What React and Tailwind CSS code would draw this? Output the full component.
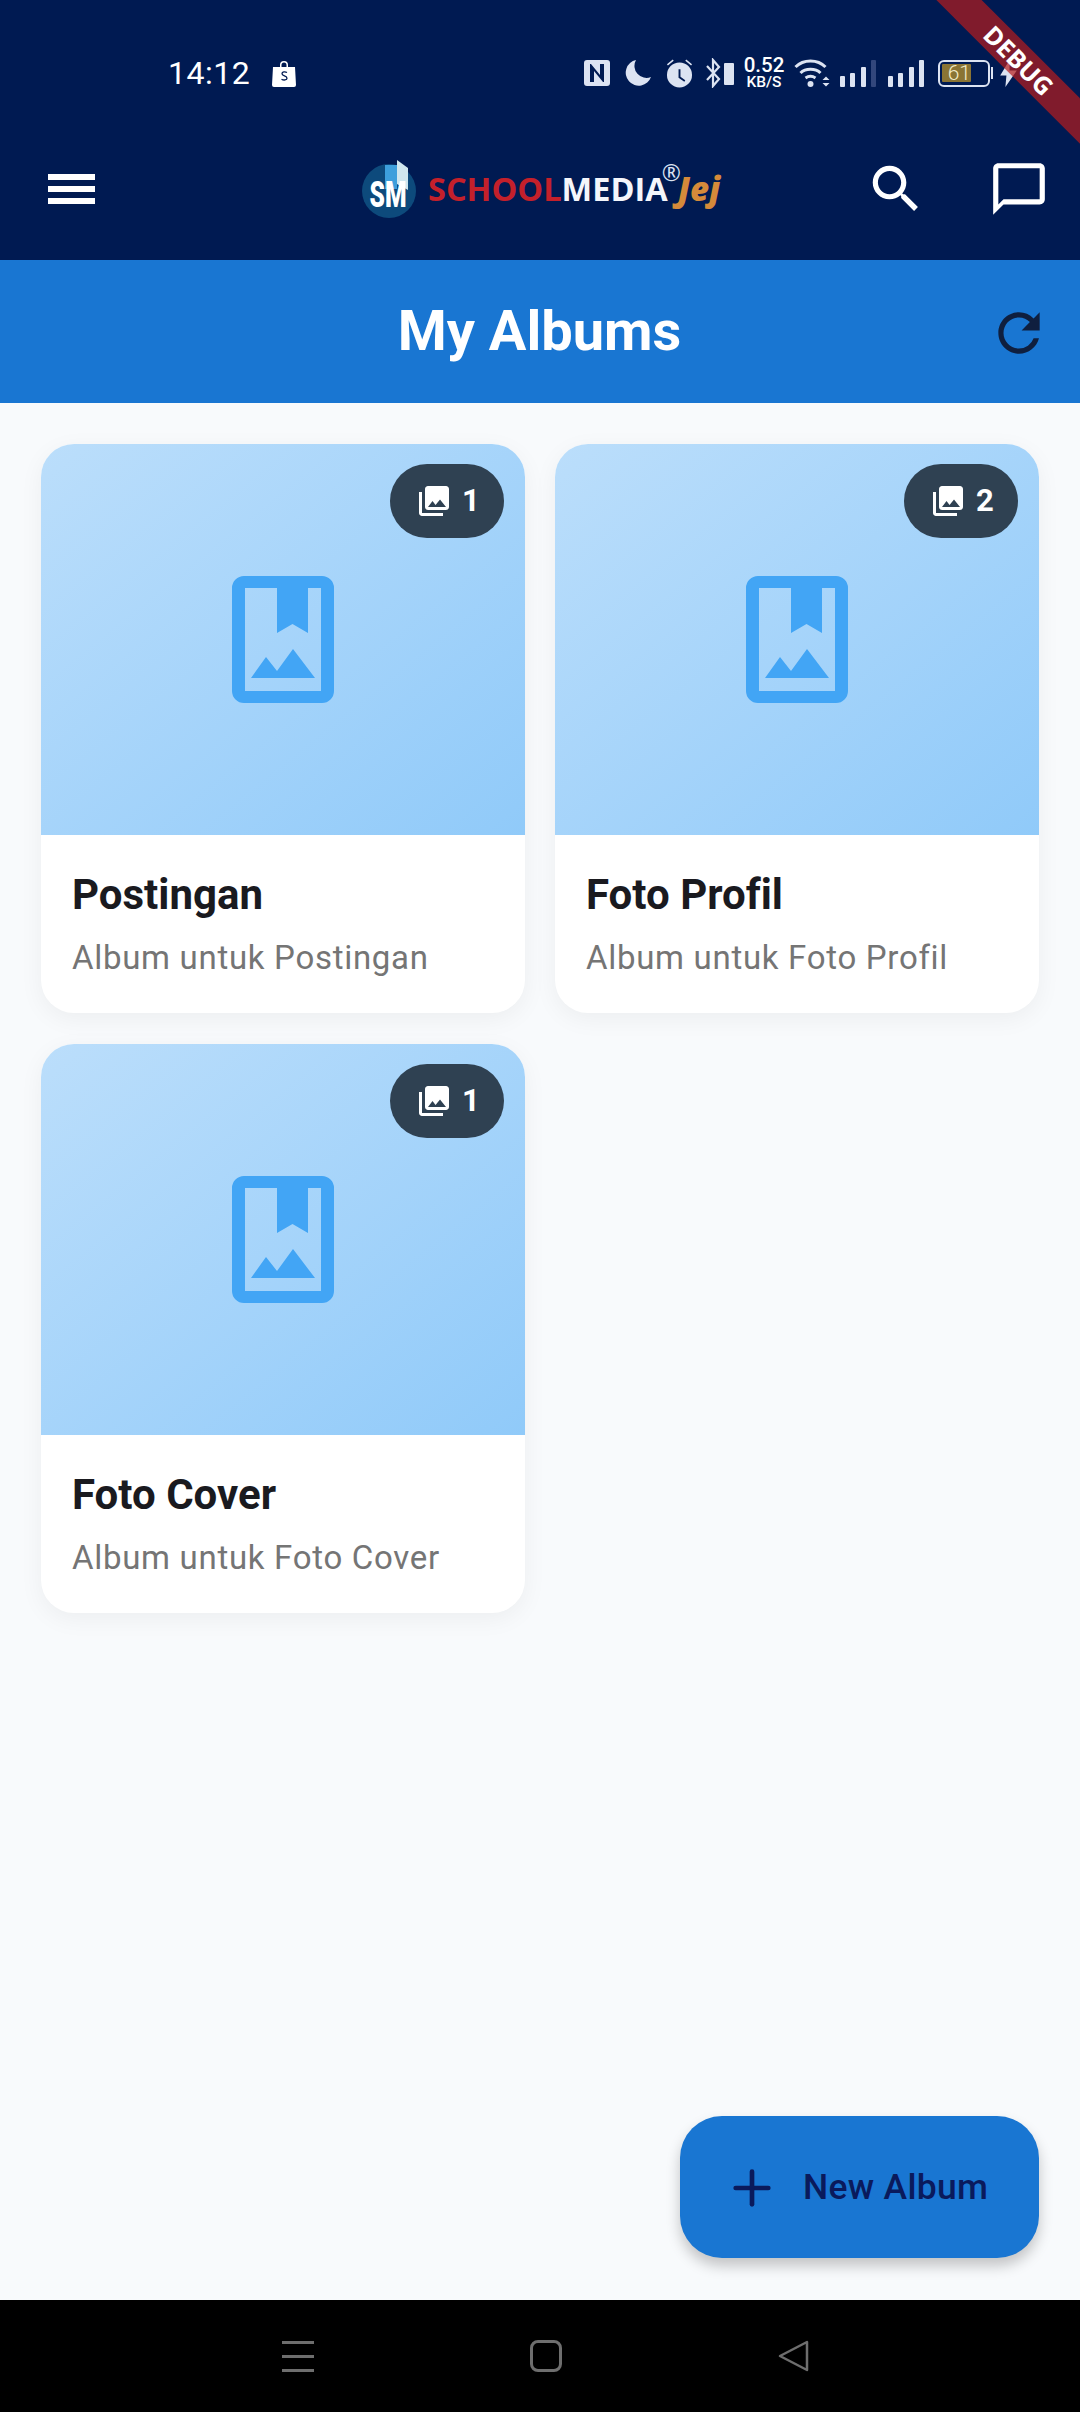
import React from 'react';
import { Plus } from 'lucide-react';

const albums = [
  { title: 'Postingan', subtitle: 'Album untuk Postingan', count: 1 },
  { title: 'Foto Profil', subtitle: 'Album untuk Foto Profil', count: 2 },
  { title: 'Foto Cover', subtitle: 'Album untuk Foto Cover', count: 1 },
];

const PhotoBadgeIcon = () => (
  <svg viewBox="0 0 24 24" className="w-[36px] h-[36px]" fill="#fff">
    <path d="M22 16V4c0-1.100-.9-2-2-2H8c-1.100 0-2 .9-2 2v12c0 1.100.9 2 2 2h12c1.100 0 2-.9 2-2zm-11-4 2.030 2.710L16 11l4 5H8l3-4zM2 6v14c0 1.100.9 2 2 2h14v-2H4V6H2z" />
  </svg>
);

const AlbumIcon = () => (
  <svg viewBox="0 0 102 127" className="w-[102px] h-[127px]" fill="#42a5f5">
    <path fillRule="evenodd" d="M12 0h78a12 12 0 0 1 12 12v103a12 12 0 0 1-12 12H12a12 12 0 0 1-12-12V12A12 12 0 0 1 12 0zm1 12v103h76V12H76v45l-15.500-9L45 57V12H13z" />
    <path d="M19 102 34 81l11 14 16-22 22 29z" />
  </svg>
);

const AlbumCard = ({ album }) => (
  <div className="bg-white rounded-[33px] overflow-hidden shadow-[0_6px_24px_rgba(0,0,0,0.05)] h-[569px] flex flex-col">
    <div className="relative h-[391px] bg-gradient-to-br from-[#bbdefb] to-[#90caf9] flex items-center justify-center">
      <AlbumIcon />
      <div className="absolute top-[20px] right-[21px] h-[74px] min-w-[114px] pl-[26px] pr-[24px] rounded-full bg-[#2f4152] flex items-center gap-[10px] text-white text-[31px] font-bold">
        <PhotoBadgeIcon />
        <span>{album.count}</span>
      </div>
    </div>
    <div className="px-[31px] pt-[35px] [font-variant-ligatures:none]">
      <h2 className="text-[42px] leading-[50px] font-bold text-[#1a1a1f]">{album.title}</h2>
      <p className="mt-[17px] text-[33px] leading-[42px] text-[#757575] tracking-[0.7px]">{album.subtitle}</p>
    </div>
  </div>
);

const SignalBars = ({ dimLast, className }) => (
  <div className={`flex items-end justify-between w-[36px] h-[27px] ${className}`}>
    <div className="w-[5px] h-[11px] rounded-[1px] bg-[#dce3f2]" />
    <div className="w-[5px] h-[14px] rounded-[1px] bg-[#dce3f2]" />
    <div className="w-[5px] h-[20px] rounded-[1px] bg-[#dce3f2]" />
    <div className={`w-[5px] h-[27px] rounded-[1px] ${dimLast ? 'bg-[#33477c]' : 'bg-[#dce3f2]'}`} />
  </div>
);

const StatusBar = () => (
  <div className="h-[90px] pt-[53px] pl-[168px] pr-[63px] flex items-start justify-between text-white">
    <div className="flex items-center h-[40px] gap-[22px]">
      <span className="text-[32px] leading-[40px] tracking-[0.5px]">14:12</span>
      <svg viewBox="0 0 24 28" className="w-[24px] h-[28px]" fill="#fff">
        <path d="M8 8V6a4 4 0 0 1 8 0v2h7l1 18a2 2 0 0 1-2 2H2a2 2 0 0 1-2-2L1 8h7zm1.500 0h5V6a2.500 2.500 0 0 0-5 0v2z" />
        <path d="M15 13.500c-2-1.200-5-.8-5 1.200 0 2.600 5 1.800 5 4.500 0 2-3.400 2.300-5.500 1" fill="none" stroke="#001a52" strokeWidth="1.300" />
      </svg>
    </div>
    <div className="flex items-center h-[40px] text-[#dce3f2]">
      <svg viewBox="0 0 26 26" className="w-[26px] h-[26px]" fill="currentColor">
        <path fillRule="evenodd" d="M3 0h20a3 3 0 0 1 3 3v20a3 3 0 0 1-3 3H3a3 3 0 0 1-3-3V3a3 3 0 0 1 3-3zm3 4v18h4V11l9 11h1V4h-4v11L7 4H6z" />
      </svg>
      <svg viewBox="0 0 26 26" className="w-[26px] h-[26px] ml-[15px]" fill="currentColor">
        <path d="M11 0A13 13 0 1 0 26 17 12 12 0 0 1 11 0z" />
      </svg>
      <svg viewBox="0 0 28 30" className="w-[27px] h-[30px] ml-[15px]" fill="currentColor">
        <path fillRule="evenodd" d="M14 4a13 13 0 1 1 0 26 13 13 0 0 1 0-26zm-1 7v9l6 4 1-1.500-5-3.500v-8h-2z" />
        <path d="M1 6l6-5 1 1.300-6 5zM27 6l-6-5-1 1.300 6 5z" />
      </svg>
      <svg viewBox="0 0 28 30" className="w-[28px] h-[30px] ml-[13px]" fill="none" stroke="currentColor" strokeWidth="2.200">
        <path d="M1 8l12 13-6 7V2l6 7L1 22" />
        <rect x="18" y="5" width="10" height="22" rx="1" fill="currentColor" stroke="none" />
      </svg>
      <div className="ml-[10px] w-[40px] flex flex-col items-center text-white font-medium">
        <span className="text-[20.500px] leading-[17px]">0.52</span>
        <span className="text-[15.500px] leading-[16px]">KB/S</span>
      </div>
      <svg viewBox="0 0 36 30" className="w-[37px] h-[30px] ml-[10px]" fill="none" stroke="currentColor" strokeWidth="3">
        <path d="M1 9c8-8 22-8 30 0M6 15c5-5 15-5 20 0M11 20c3-2 7-2 10 0" />
        <circle cx="16" cy="26" r="3" fill="currentColor" stroke="none" />
        <path d="M28 22h7l-3.500-3.500zM28 25h7l-3.500 3.500z" fill="currentColor" stroke="none" />
      </svg>
      <SignalBars dimLast className="ml-[9px]" />
      <SignalBars className="ml-[12px]" />
      <div className="ml-[14px] w-[52px] h-[27px] rounded-[6px] border-2 border-[#dce3f2] flex items-center">
        <div className="ml-[2px] w-[29px] h-[18px] bg-[#8a7434] rounded-[1px] flex items-center justify-end">
          <span className="text-[21px] leading-none text-[#f3ecc9] font-light">61</span>
        </div>
      </div>
      <div className="w-[2px] h-[12px] bg-[#dce3f2] ml-[1px]" />
      <svg viewBox="0 0 16 26" className="w-[17px] h-[27px] ml-[7px]" fill="currentColor">
        <path d="M9 0 0 15h6l-1 11 11-16H9z" />
      </svg>
    </div>
  </div>
);

const Logo = () => (
  <div className="flex items-center">
    <svg viewBox="0 0 54 58" className="w-[54px] h-[58px] overflow-visible">
      <circle cx="27" cy="31" r="27" fill="#0d4a7c" />
      <path d="M23 5h12v24H23z" fill="#3d9fdc" />
      <path d="M35 0l11 8v22l-11-6z" fill="#cfe6ee" />
      <text x="26" y="47" textAnchor="middle" fill="#fff" fontFamily="Roboto, sans-serif" fontWeight="900" fontSize="37" textLength="37" lengthAdjust="spacingAndGlyphs">SM</text>
    </svg>
    <div className="ml-[12px] flex items-baseline h-[48px] leading-[48px] font-['Open_Sans',sans-serif] font-bold text-[32.500px]">
      <span className="text-[#c4202b]">SCHOOL</span>
      <span className="text-[#f4f6fb]">MEDIA</span>
      <span className="self-start -mt-[4px] -ml-[6px] text-[#dce3f2] text-[23px] leading-[23px] font-normal">®</span>
      <span className="-ml-[3px] italic font-extrabold text-[#d58a3a] text-[33px]">Jej</span>
    </div>
  </div>
);

export default function App() {
  return (
    <div className="w-[1080px] h-[2412px] relative overflow-hidden flex flex-col bg-[#f8fafc] font-['Roboto',sans-serif]">
      <header className="h-[260px] bg-[#001a52] flex-shrink-0">
        <StatusBar />
        <div className="h-[170px] pt-[28px] pl-[48px] pr-[30px] grid grid-cols-[314px_auto_1fr] items-center">
          <div className="flex flex-col gap-[6px] w-[47px]">
            <div className="h-[6px] bg-white" />
            <div className="h-[6px] bg-white" />
            <div className="h-[6px] bg-white" />
          </div>
          <Logo />
          <div className="flex items-center justify-end gap-[61px]">
            <svg viewBox="0 0 24 24" className="w-[62px] h-[62px]" fill="#fff">
              <path d="M15.500 14h-.79l-.28-.27C15.410 12.590 16 11.110 16 9.500 16 5.910 13.090 3 9.500 3S3 5.910 3 9.500 5.910 16 9.500 16c1.610 0 3.090-.59 4.230-1.570l.27.28v.79l5 4.990L20.490 19l-4.990-5zm-6 0C7.010 14 5 11.990 5 9.500S7.010 5 9.500 5 14 7.010 14 9.500 11.990 14 9.500 14z" />
            </svg>
            <svg viewBox="0 0 24 24" className="w-[62px] h-[62px]" fill="#fff">
              <path d="M20 2H4c-1.100 0-2 .9-2 2v18l4-4h14c1.100 0 2-.9 2-2V4c0-1.100-.9-2-2-2zm0 14H6l-2 2V4h16v12z" />
            </svg>
          </div>
        </div>
      </header>

      <div className="h-[143px] pb-[2px] bg-[#1976d2] flex-shrink-0 relative flex items-center justify-center">
        <h1 className="text-[56px] font-bold text-white -ml-[1px]">My Albums</h1>
        <svg viewBox="0 0 24 24" className="absolute right-[30px] top-[42px] w-[62px] h-[62px]" fill="#0f1f3f">
          <path d="M17.650 6.350A7.958 7.958 0 0 0 12 4c-4.420 0-7.990 3.580-7.990 8s3.570 8 7.990 8c3.730 0 6.840-2.550 7.730-6h-2.080A5.990 5.990 0 0 1 12 18c-3.310 0-6-2.690-6-6s2.690-6 6-6c1.660 0 3.140.69 4.220 1.780L13 11h7V4l-2.350 2.350z" />
        </svg>
      </div>

      <main className="flex-1 px-[41px] pt-[41px]">
        <div className="grid grid-cols-2 gap-x-[30px] gap-y-[31px]">
          {albums.map((album) => (
            <AlbumCard key={album.title} album={album} />
          ))}
        </div>
      </main>

      <button className="absolute left-[680px] top-[2116px] w-[359px] h-[142px] pt-[2px] pl-[44px] rounded-[42px] bg-[#1976d2] shadow-[0_8px_14px_rgba(0,0,0,0.22)] flex items-center text-[#0a1a5c]">
        <Plus size={56} strokeWidth={2} />
        <span className="ml-[23px] text-[35.500px] font-medium tracking-[0.3px]">New Album</span>
      </button>

      <nav className="h-[112px] bg-black flex-shrink-0 flex items-center justify-between pl-[282px] pr-[270px]">
        <div className="flex flex-col gap-[11px] w-[32px]">
          <div className="h-[3px] bg-[#6e6e6e]" />
          <div className="h-[3px] bg-[#6e6e6e]" />
          <div className="h-[3px] bg-[#6e6e6e]" />
        </div>
        <div className="w-[32px] h-[32px] rounded-[8px] border-[3px] border-[#6e6e6e]" />
        <svg viewBox="0 0 32 32" className="w-[32px] h-[32px]" fill="none" stroke="#6e6e6e" strokeWidth="2.500" strokeLinejoin="round">
          <path d="M2 16 29 2v28z" />
        </svg>
      </nav>

      {/* debug ribbon across the top right corner */}
      <div className="absolute top-[44px] -right-[79px] w-[280px] h-[32px] rotate-45 bg-[#b71c1c]/70 flex items-center justify-center text-white font-['Open_Sans',sans-serif] font-bold text-[25px] leading-none">
        DEBUG
      </div>
    </div>
  );
}
